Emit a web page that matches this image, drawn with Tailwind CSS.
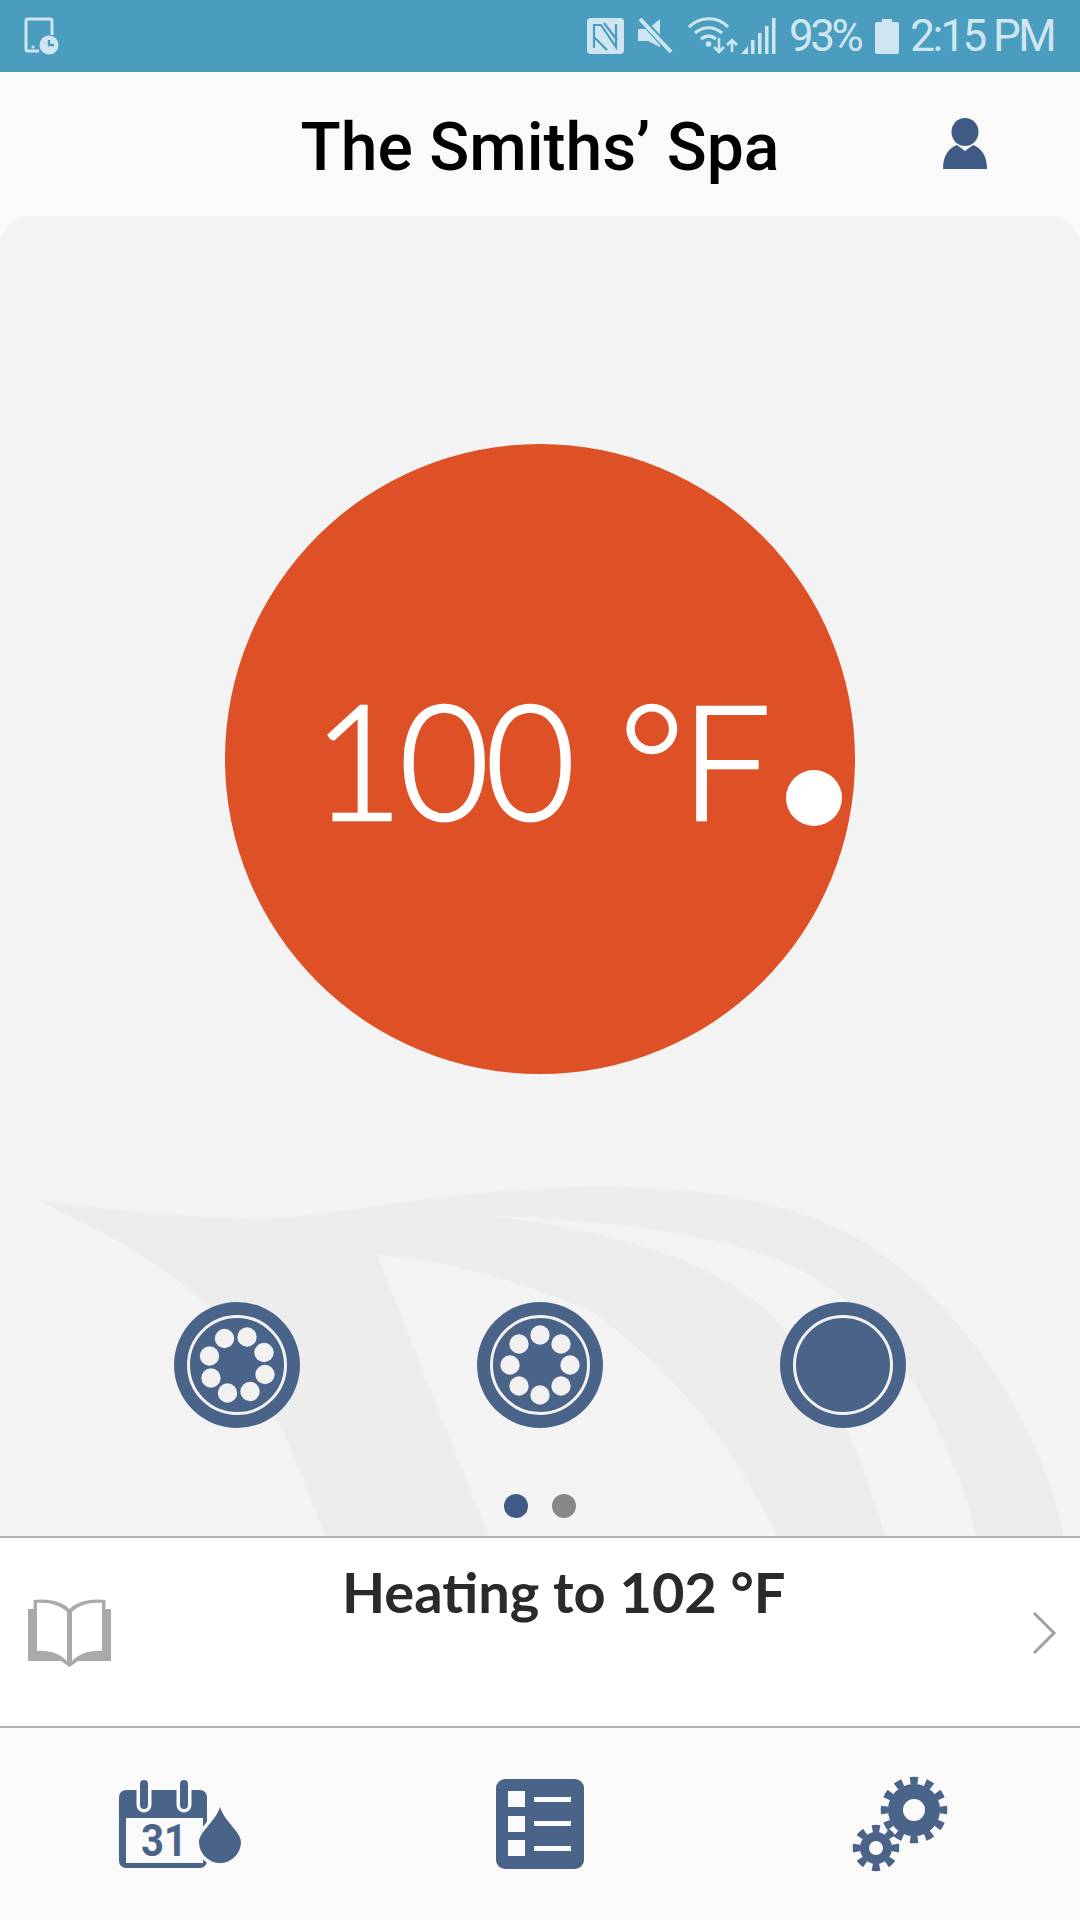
<!DOCTYPE html>
<html lang="en">
<head>
    <meta charset="UTF-8">
    <meta name="viewport" content="width=device-width, initial-scale=1.0">
    <title>The Smiths' Spa</title>
    <script src="https://cdn.jsdelivr.net/npm/@tailwindcss/browser@4"></script>
</head>
<body class="bg-[#fafafa]">
<div class="w-[1080px] h-[1920px] flex flex-col overflow-hidden font-['Roboto',sans-serif]">

    <!-- status bar -->
    <div class="h-[72px] shrink-0 bg-[#4a9dbf] flex items-center justify-between pl-[24px] pr-[26px] text-[#cfe6f0]">
        <svg class="w-[36px] h-[38px]" viewBox="0 0 36 38" fill="none">
            <path d="M15 34H4a2 2 0 0 1-2-2V4a2 2 0 0 1 2-2h22a2 2 0 0 1 2 2v14" stroke="#cfe6f0" stroke-width="3"/>
            <circle cx="9" cy="30" r="1.6" fill="#cfe6f0"/>
            <circle cx="25" cy="28" r="9.5" fill="#cfe6f0"/>
            <path d="M25 23v5h5" stroke="#4a9dbf" stroke-width="2.4"/>
        </svg>
        <div class="flex items-center">
            <svg class="w-[38px] h-[37px]" viewBox="0 0 38 37">
                <rect width="37" height="36" rx="4" fill="#cfe6f0"/>
                <path d="M7 30V7h7l15 22V6" fill="none" stroke="#4a9dbf" stroke-width="2.2"/>
                <path d="M7 19l13 13M17 5l13 17" fill="none" stroke="#4a9dbf" stroke-width="2.2"/>
            </svg>
            <svg class="w-[36px] h-[36px] ml-[13px]" viewBox="0 0 36 36">
                <path d="M0 11h10L22 1v28L10 23H0z" fill="#cfe6f0"/>
                <path d="M3 1l30 33" stroke="#4a9dbf" stroke-width="7"/>
                <path d="M2 1l31 33" stroke="#cfe6f0" stroke-width="4"/>
            </svg>
            <svg class="w-[50px] h-[38px] ml-[14px]" viewBox="0 0 50 38" fill="none" stroke="#cfe6f0">
                <path d="M1 10c11-11 29-11 39 0" stroke-width="3.2"/>
                <path d="M7 16c8-7 19-7 27 0" stroke-width="3.2"/>
                <path d="M13 22c5-4 10-4 15 0" stroke-width="3.2"/>
                <circle cx="20.500" cy="27" r="2.800" fill="#cfe6f0" stroke="none"/>
                <path d="M31 21v14m-5-5l5 5 5-5" stroke-width="2.600"/>
                <path d="M44 35V23m-5 5l5-5 5 5" stroke-width="2.600"/>
            </svg>
            <svg class="w-[36px] h-[36px] ml-[3px]" viewBox="0 0 36 36">
                <path d="M0 36l7-8v8z" fill="#cfe6f0"/>
                <rect x="10" y="22" width="3.500" height="14" fill="#cfe6f0"/>
                <rect x="17" y="15" width="3.500" height="21" fill="#cfe6f0"/>
                <rect x="24" y="8" width="3.500" height="28" fill="#cfe6f0"/>
                <rect x="31" y="0" width="3.500" height="36" fill="#cfe6f0"/>
            </svg>
            <span class="ml-[12px] text-[44px] leading-none font-normal tracking-[-3.5px]">93%</span>
            <svg class="w-[24px] h-[35px] ml-[15px]" viewBox="0 0 24 35">
                <path d="M7 0h10v3h5a2 2 0 0 1 2 2v28a2 2 0 0 1-2 2H2a2 2 0 0 1-2-2V5a2 2 0 0 1 2-2h5z" fill="#cfe6f0"/>
            </svg>
            <span class="ml-[11px] text-[44px] leading-none font-normal tracking-[-2.6px]">2:15 PM</span>
        </div>
    </div>

    <!-- header -->
    <div class="h-[144px] shrink-0 relative flex items-center justify-center pt-[8px]">
        <h1 class="text-[66px] leading-none font-medium text-black">The Smiths’ Spa</h1>
        <svg class="absolute left-[942px] top-[46px] w-[46px] h-[52px]" viewBox="0 0 46 52" fill="#3f5a84">
            <ellipse cx="23" cy="14" rx="13.500" ry="14"/>
            <path d="M15 27l8 6 8-6c8 3 14 10 14 24H1C1 37 7 30 15 27z"/>
        </svg>
    </div>

    <!-- main card -->
    <div class="relative flex-1 bg-[#f3f3f3] rounded-t-[30px] flex flex-col items-center overflow-hidden">
        <svg class="absolute left-0 top-0 w-[1080px] h-[1320px]" viewBox="0 216 1080 1320">
            <path fill="#ededed" d="M37 1200C130 1212 210 1220 275 1218C350 1215 450 1187 606 1187C700 1187 790 1200 860 1240C960 1300 1040 1420 1064 1537L325 1537C305 1480 275 1410 241 1345C190 1275 120 1240 37 1200Z"/>
            <path fill="#f3f3f3" d="M489 1215C620 1222 730 1235 800 1270C890 1315 945 1420 977 1537L885 1537C860 1440 825 1385 780 1325C730 1265 620 1232 489 1215Z"/>
            <path fill="#f3f3f3" d="M377 1255C450 1260 530 1285 590 1310C680 1375 735 1450 778 1537L489 1537Z"/>
        </svg>

        <!-- temperature dial -->
        <div class="relative mt-[228px] w-[630px] h-[630px] rounded-full bg-[#de5126] flex items-center justify-center">
            <span class="text-[160px] leading-none font-['Lato',sans-serif] font-light text-white tracking-[-4px] -mt-[2px] [-webkit-text-stroke:2.5px_white]"><span class="inline-block origin-left scale-x-[0.97]">100</span> °F</span>
            <div class="absolute left-[561px] top-[326px] w-[56px] h-[56px] rounded-full bg-white"></div>
        </div>

        <!-- jet buttons -->
        <div class="relative mt-[228px] w-full flex justify-center gap-[177px]">
            <svg class="w-[126px] h-[126px]" viewBox="-63 -63 126 126">
                <circle r="63" fill="#4a6389"/>
                <circle r="48.500" fill="none" stroke="#f3f3f3" stroke-width="3"/>
                <g fill="#f1f1f1">
                    <circle cx="-12.500" cy="-26.500" r="9.700"/>
                    <circle cx="10" cy="-28" r="9.700"/>
                    <circle cx="27" cy="-12.500" r="9.700"/>
                    <circle cx="28" cy="9.500" r="9.700"/>
                    <circle cx="13" cy="26.500" r="9.700"/>
                    <circle cx="-9.500" cy="28" r="9.700"/>
                    <circle cx="-26" cy="13" r="9.700"/>
                    <circle cx="-27.500" cy="-9" r="9.700"/>
                </g>
            </svg>
            <svg class="w-[126px] h-[126px]" viewBox="-63 -63 126 126">
                <circle r="63" fill="#4a6389"/>
                <circle r="48.500" fill="none" stroke="#f3f3f3" stroke-width="3"/>
                <g fill="#f1f1f1">
                    <circle cx="0" cy="-30" r="9.700"/>
                    <circle cx="21" cy="-21" r="9.700"/>
                    <circle cx="30" cy="0" r="9.700"/>
                    <circle cx="21" cy="21" r="9.700"/>
                    <circle cx="0" cy="30" r="9.700"/>
                    <circle cx="-21" cy="21" r="9.700"/>
                    <circle cx="-30" cy="0" r="9.700"/>
                    <circle cx="-21" cy="-21" r="9.700"/>
                </g>
            </svg>
            <svg class="w-[126px] h-[126px]" viewBox="-63 -63 126 126">
                <circle r="63" fill="#4a6389"/>
                <circle r="48.500" fill="none" stroke="#f3f3f3" stroke-width="3"/>
            </svg>
        </div>

        <!-- pagination -->
        <div class="relative mt-[66px] flex gap-[24px]">
            <div class="w-[24px] h-[24px] rounded-full bg-[#3f5a84]"></div>
            <div class="w-[24px] h-[24px] rounded-full bg-[#888888]"></div>
        </div>
    </div>

    <!-- status panel -->
    <div class="h-[192px] shrink-0 relative bg-white border-y-2 border-[#b0b0b0]">
        <svg class="absolute left-[28px] top-[61px] w-[83px] h-[68px]" viewBox="0 0 83 68">
            <path fill="#aaaaaa" d="M5.500 10H0V62H33L41.500 68L50 62H83V10H77.500V1C62 -1 48 3 41.500 10C35 3 21 -1 5.500 1Z"/>
            <path fill="#ffffff" d="M9 4C20 3 32 6 39 13V62C32 55 22 51 9 52Z"/>
            <path fill="#ffffff" d="M74 4C63 3 51 6 44 13V62C51 55 61 51 74 52Z"/>
        </svg>
        <p class="absolute left-[342px] top-[26px] text-[56px] leading-none font-['Lato',sans-serif] font-bold text-[#2a2a2a] whitespace-nowrap">Heating to 102 °F</p>
        <svg class="absolute left-[1031px] top-[73px] w-[26px] h-[44px]" viewBox="0 0 26 44" fill="none">
            <path d="M3 2l20 20L3 42" stroke="#a0a0a0" stroke-width="3"/>
        </svg>
    </div>

    <!-- bottom nav -->
    <div class="h-[192px] shrink-0 relative">
        <svg class="absolute left-[118px] top-[48px] w-[126px] h-[96px]" viewBox="0 0 126 96">
            <rect x="1" y="14" width="88" height="78" rx="7" fill="#4a6389"/>
            <rect x="8" y="42" width="77" height="45" fill="#fafafa"/>
            <path d="M26 4v25M66 4v25" stroke="#fafafa" stroke-width="15" stroke-linecap="round"/>
            <path d="M26 8v21M66 8v21" stroke="#4a6389" stroke-width="8" stroke-linecap="round"/>
            <text x="46" y="80" text-anchor="middle" font-family="Roboto" font-weight="700" font-size="44" fill="#4a6389" textLength="46" lengthAdjust="spacingAndGlyphs">31</text>
            <path d="M102 31C98 45 81 56 81 66A21 21 0 0 0 123 66C123 56 106 45 102 31Z" fill="#fafafa" stroke="#fafafa" stroke-width="7"/>
            <path d="M102 31C98 45 81 56 81 66A21 21 0 0 0 123 66C123 56 106 45 102 31Z" fill="#4a6389"/>
        </svg>
        <svg class="absolute left-[496px] top-[51px] w-[88px] h-[90px]" viewBox="0 0 88 90">
            <rect width="88" height="90" rx="9" fill="#4a6389"/>
            <g fill="#fafafa">
                <rect x="12" y="12" width="17" height="16"/>
                <rect x="12" y="37" width="17" height="16"/>
                <rect x="12" y="61" width="17" height="16"/>
                <rect x="38" y="18" width="37" height="5"/>
                <rect x="38" y="42" width="37" height="5"/>
                <rect x="38" y="67" width="37" height="5"/>
            </g>
        </svg>
        <svg class="absolute left-[850px] top-[46px] w-[100px] h-[100px]" viewBox="0 0 100 100" fill="none" stroke="#4a6389">
            <circle cx="64" cy="36" r="18.500" stroke-width="15"/>
            <circle cx="64" cy="36" r="29.500" stroke-width="7.500" pathLength="24" stroke-dasharray="1 1" stroke-dashoffset="0.5"/>
            <circle cx="26" cy="74" r="11.500" stroke-width="9"/>
            <circle cx="26" cy="74" r="19.500" stroke-width="7.500" pathLength="16" stroke-dasharray="1 1" stroke-dashoffset="0.5"/>
        </svg>
    </div>
</div>
</body>
</html>
